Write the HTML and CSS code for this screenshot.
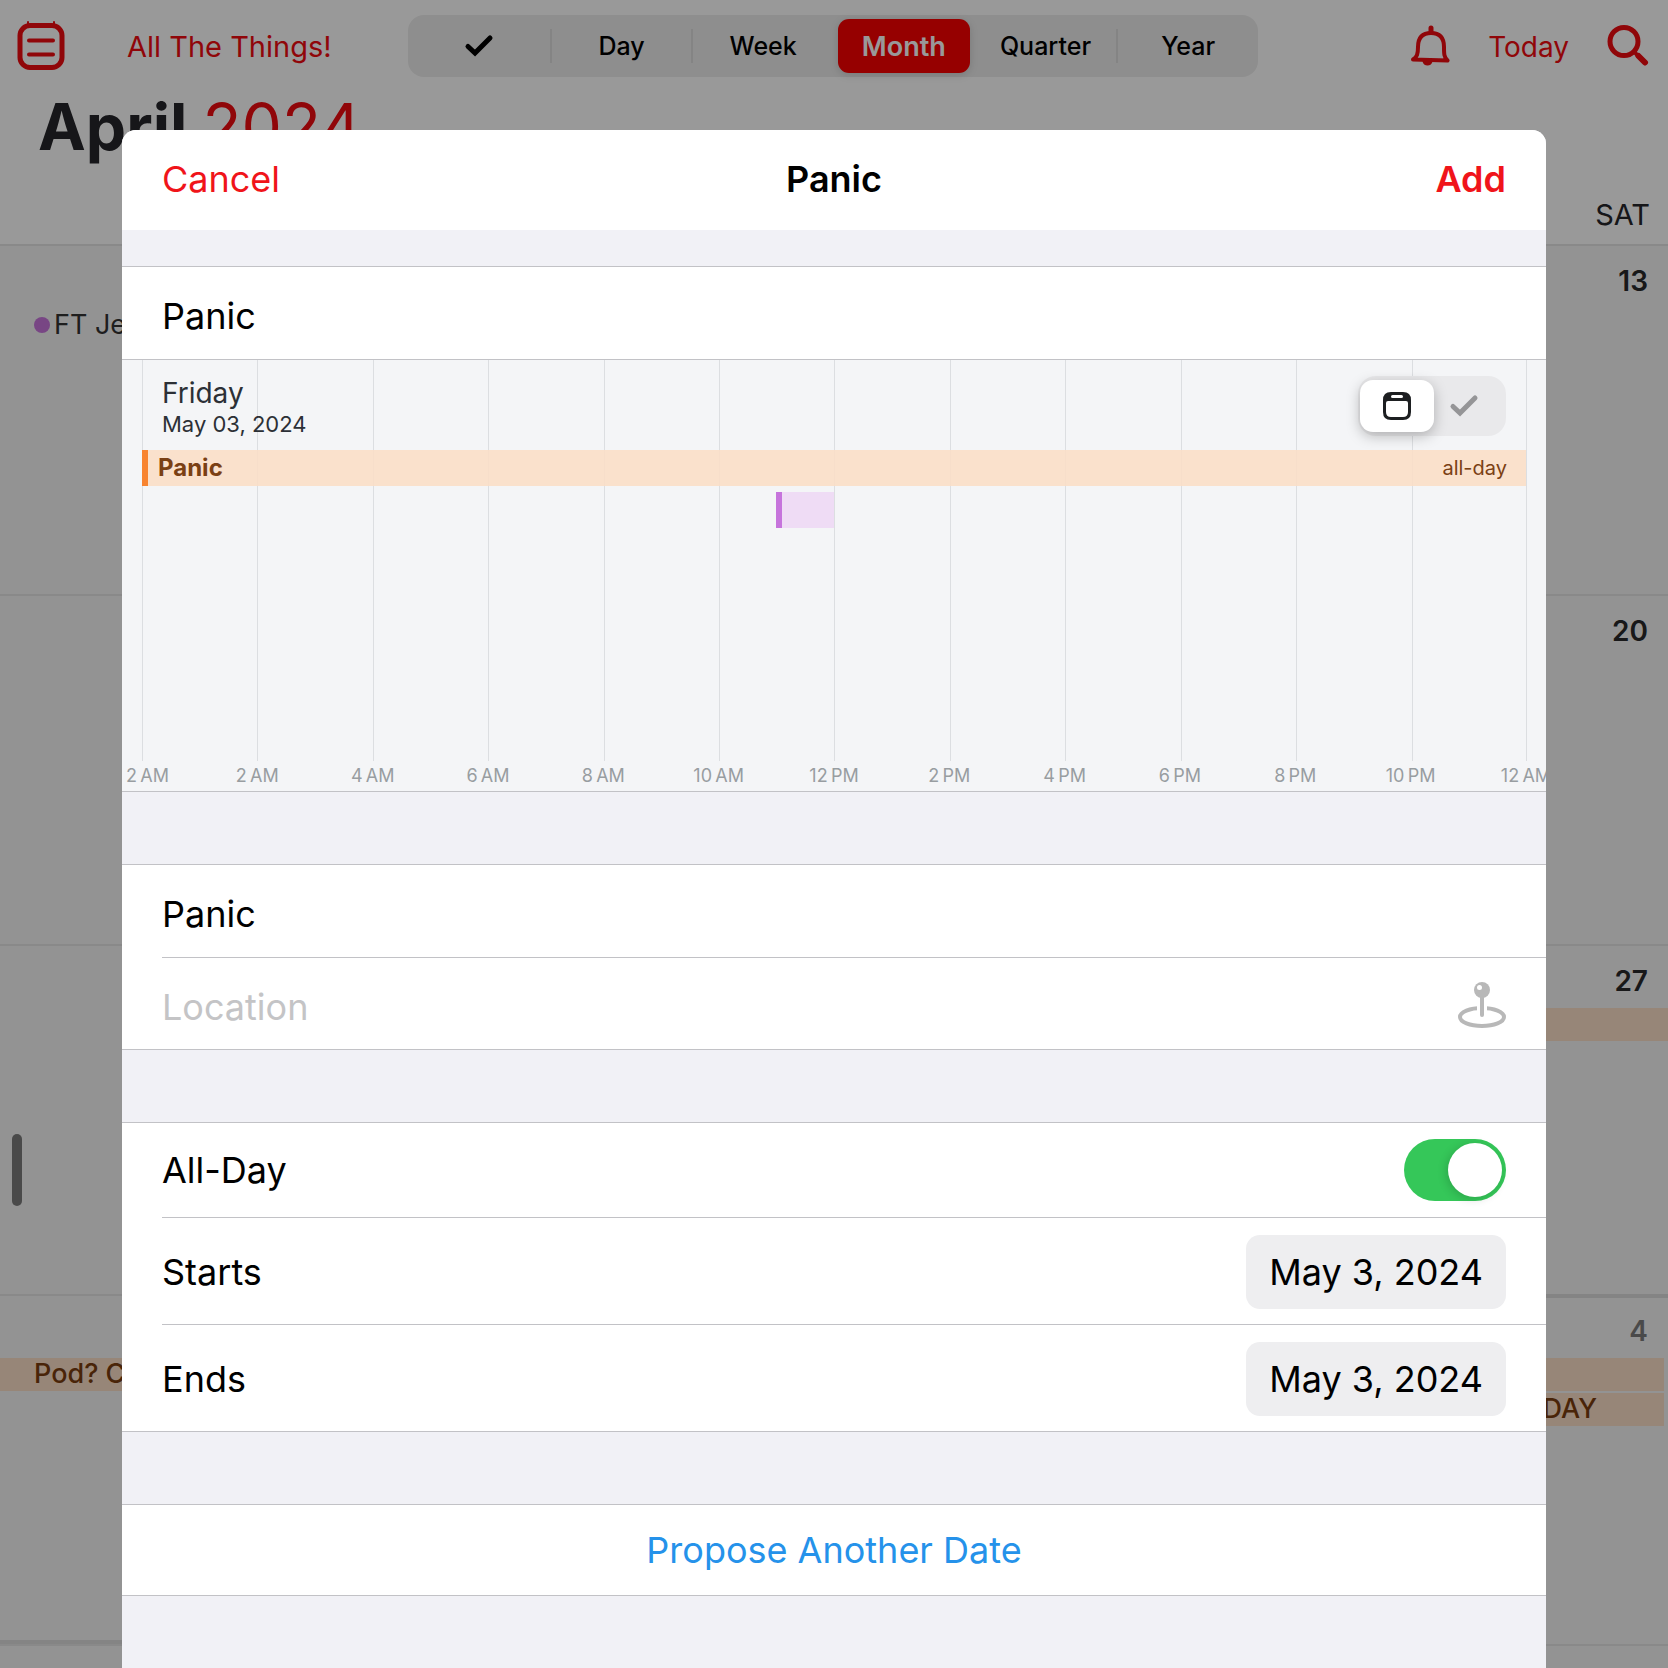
FILE: index.html
```html
<!DOCTYPE html>
<html lang="en">
<head>
<meta charset="utf-8">
<meta name="viewport" content="width=device-width, initial-scale=1">
<title>Calendar</title>
<link rel="stylesheet" href="styles.css">
</head>
<body>
<div class="calendar">
  <header class="toolbar">
    <div class="toolbar-side">
      <button class="icon-button" aria-label="Lists">
        <svg width="48" height="52" viewBox="0 0 48 52" fill="none" stroke="currentColor" stroke-width="5" stroke-linecap="round">
          <rect x="3" y="5.500" width="42" height="42" rx="10"/>
          <path d="M12 20.500H36M12 34.500H36" stroke-width="4"/>
          <path d="M11 2V4M37 2V4" stroke-width="2"/>
        </svg>
      </button>
      <button class="text-button calendar-set">All The Things!</button>
    </div>
    <nav class="views" aria-label="View">
      <button class="view" aria-label="Tasks">
        <svg width="30" height="24" viewBox="0 0 30 24" fill="none" stroke="currentColor" stroke-width="5" stroke-linecap="round" stroke-linejoin="miter"><path d="M4 12.500L11 19L26 4"/></svg>
      </button>
      <button class="view divided">Day</button>
      <button class="view divided">Week</button>
      <button class="view selected">Month</button>
      <button class="view">Quarter</button>
      <button class="view divided">Year</button>
    </nav>
    <div class="toolbar-side end">
      <button class="icon-button" aria-label="Notifications">
        <svg width="40" height="42" viewBox="0 0 40 42" fill="none" stroke="currentColor" stroke-width="4" stroke-linecap="round" stroke-linejoin="round">
          <path d="M3 34.500C7 32 8 29 8 22C8 13 12 8 21 8C30 8 34 13 34 22C34 29 34 32 37.500 35.500Z"/>
          <path d="M21 3V7" stroke-width="5"/>
          <path d="M12.500 36H22.500C22 42 13 42 12.500 36Z" fill="currentColor" stroke="none"/>
        </svg>
      </button>
      <button class="text-button today">Today</button>
      <button class="icon-button" aria-label="Search">
        <svg width="42" height="42" viewBox="0 0 42 42" fill="none" stroke="currentColor" stroke-linecap="round">
          <circle cx="17" cy="16.500" r="14" stroke-width="5"/>
          <path d="M27.500 27L31 31" stroke-width="4"/><path d="M31.500 31L38 37.500" stroke-width="6"/>
        </svg>
      </button>
    </div>
  </header>

  <h1 class="month-title">April <span>2024</span></h1>
  <div class="weekdays"><span>SAT</span></div>

  <main class="weeks">
    <section class="week">
      <div class="day"><p class="event timed"><i class="dot"></i>FT Je</p></div>
      <div class="day last"><time class="number">13</time></div>
    </section>
    <section class="week">
      <div class="day"></div>
      <div class="day last"><time class="number">20</time></div>
    </section>
    <section class="week">
      <div class="day"></div>
      <div class="day last"><time class="number">27</time><p class="event block"></p></div>
    </section>
    <section class="week">
      <div class="day month-end"><p class="event block lead">Pod? C</p></div>
      <div class="day last new-month"><time class="number muted">4</time><p class="event block ends"></p><p class="event block ends tail">DAY</p></div>
    </section>
    <section class="week">
      <div class="day"></div>
      <div class="day last"></div>
    </section>
  </main>
  <div class="drag-handle"></div>
</div>

<div class="backdrop">
  <form class="sheet">
    <header class="sheet-header">
      <button type="button" class="sheet-action">Cancel</button>
      <h2>Panic</h2>
      <button type="button" class="sheet-action primary">Add</button>
    </header>

    <div class="group first">
      <div class="row field"><input class="text-input" type="text" value="Panic" aria-label="Quick entry"></div>
    </div>

    <section class="timeline">
      <div class="grid-lines"><i></i><i></i><i></i><i></i><i></i><i></i><i></i><i></i><i></i><i></i><i></i><i></i></div>
      <div class="timeline-body">
        <div class="timeline-head">
          <div><p class="weekday">Friday</p><p class="date">May 03, 2024</p></div>
          <div class="kind">
            <button type="button" class="kind-option chosen" aria-label="Event">
              <svg width="28" height="28" viewBox="0 0 28 28"><path fill="#1d1f21" fill-rule="evenodd" d="M8 0H20Q28 0 28 8V20Q28 28 20 28H8Q0 28 0 20V8Q0 0 8 0ZM3 11V20Q3 25 8 25H20Q25 25 25 20V11Q25 9 23 9H5Q3 9 3 11ZM9.500 3Q8 3 8 4.500Q8 6 9.500 6H18.500Q20 6 20 4.500Q20 3 18.500 3Z"/></svg>
            </button>
            <button type="button" class="kind-option" aria-label="Task">
              <svg width="30" height="24" viewBox="0 0 30 24" fill="none" stroke="#959597" stroke-width="5" stroke-linecap="round"><path d="M4 12.500L11 19L26 4"/></svg>
            </button>
          </div>
        </div>
        <div class="bar allday"><strong>Panic</strong><span>all-day</span></div>
        <div class="hours"><div class="bar busy"></div></div>
      </div>
      <div class="labels"><span>2&#8201;AM</span><span>2&#8201;AM</span><span>4&#8201;AM</span><span>6&#8201;AM</span><span>8&#8201;AM</span><span>10&#8201;AM</span><span>12&#8201;PM</span><span>2&#8201;PM</span><span>4&#8201;PM</span><span>6&#8201;PM</span><span>8&#8201;PM</span><span>10&#8201;PM</span><span>12&#8201;AM</span></div>
    </section>

    <div class="group">
      <div class="row field"><input class="text-input" type="text" value="Panic" aria-label="Title"></div>
      <div class="row field">
        <input class="text-input" type="text" placeholder="Location" aria-label="Location">
        <button type="button" class="icon-button pin" aria-label="Choose on map">
          <svg width="48" height="48" viewBox="0 0 48 48" fill="none" stroke="#b8b8b8" stroke-width="4">
            <ellipse cx="24" cy="36" rx="22" ry="9"/>
            <path d="M24 20V32" stroke="#fff" stroke-width="10"/>
            <path d="M24 16V34" stroke-linecap="round"/>
            <circle cx="24" cy="9" r="8" fill="#b8b8b8" stroke="none"/>
            <circle cx="21.500" cy="6.500" r="2.500" fill="#fff" stroke="none"/>
          </svg>
        </button>
      </div>
    </div>

    <div class="group">
      <div class="row switch-row"><label for="all-day">All-Day</label><input class="switch" id="all-day" type="checkbox" role="switch" checked></div>
      <div class="row tall"><label for="starts">Starts</label><button type="button" class="date-button" id="starts">May 3, 2024</button></div>
      <div class="row tall"><label for="ends">Ends</label><button type="button" class="date-button" id="ends">May 3, 2024</button></div>
    </div>

    <div class="group"><button type="button" class="propose">Propose Another Date</button></div>
  </form>
</div>
</body>
</html>
```

FILE: styles.css
```css
* { box-sizing: border-box; }

:root {
  --red: #fa0000;
  --line: #c2c2c6;
  --inset: 40px;
}

body {
  margin: 0;
  position: relative;
  min-height: 100vh;
  overflow: hidden;
  font-family: Inter, "Liberation Sans", sans-serif;
  color: #000;
}

h1, h2, p { margin: 0; }

button {
  border: 0;
  padding: 0;
  background: none;
  color: inherit;
  font: inherit;
}

svg { display: block; }

/* Month calendar */
.calendar {
  display: flex;
  flex-direction: column;
  height: 100vh;
  overflow: hidden;
  background: #fff;
}

.toolbar {
  display: grid;
  grid-template-columns: 1fr minmax(0, 850px) 1fr;
  align-items: center;
  height: 92px;
  flex: none;
  padding: 0 19px 0 17px;
}

.toolbar-side { display: flex; align-items: center; color: #f00a10; }
.toolbar-side.end { justify-content: flex-end; gap: 38px; }
.text-button { padding-top: 2px; font-size: 29px; line-height: 36px; white-space: nowrap; }
.text-button.today { font-size: 28px; }
.calendar-set { margin-left: 62px; }

.views {
  display: grid;
  grid-template-columns: repeat(6, minmax(0, 1fr));
  align-items: center;
  height: 62px;
  border-radius: 16px;
  background: #ededed;
}

.view {
  display: flex;
  align-items: center;
  justify-content: center;
  height: 34px;
  font-size: 25px;
  font-weight: 500;
}

.view.divided { border-left: 2px solid #dcdcdc; }

.view.selected {
  height: 54px;
  margin: 0 5px;
  border-radius: 11px;
  background: var(--red);
  color: #fff;
  font-size: 27px;
  font-weight: 600;
  box-shadow: 0 2px 8px rgba(0, 0, 0, 0.15);
}

.month-title {
  flex: none;
  padding-left: 38px;
  height: 100px;
  font-size: 64px;
  line-height: 70px;
  font-weight: 700;
  color: #26262a;
}

.month-title span { font-weight: 400; color: #f00a10; }

.weekdays {
  display: flex;
  justify-content: flex-end;
  flex: none;
  height: 52px;
  padding-right: 18px;
  font-size: 29px;
  line-height: 46px;
  color: #26262a;
}

.weeks { flex: 1; background: #f5f5f5; }

.week {
  display: grid;
  grid-template-columns: repeat(7, 1fr);
  height: 350px;
}

.day { grid-column: 1; border-top: 2px solid #e4e4e4; }
.day.last { grid-column: 7; }
.day.new-month { border-top: 4px solid #dddddd; }
.day.month-end { border-bottom: 4px solid #dddddd; }

.number {
  display: block;
  height: 62px;
  padding: 17px 20px 0 0;
  text-align: right;
  font-size: 28px;
  line-height: 36px;
  font-weight: 600;
  color: #28282a;
}

.new-month .number { height: 60px; padding-top: 15px; }
.number.muted { color: #7c7c7c; }
.event { height: 33px; font-size: 27px; line-height: 32px; color: #333; }
.timed { display: flex; align-items: center; gap: 4px; margin: 62px 0 0 34px; }
.dot { width: 16px; height: 16px; border-radius: 50%; background: #c875dd; }
.block { margin-bottom: 2px; background: #fce0c8; color: #7b3d0e; font-weight: 500; }
.block.lead { margin-top: 62px; padding-left: 34px; }
.block.ends { margin-right: 4px; }
.block.tail { padding-right: 67px; text-align: right; }

.drag-handle {
  position: absolute;
  left: 12px;
  top: 68%;
  width: 10px;
  height: 72px;
  border-radius: 5px;
  background: #7c7c7c;
}

/* New event sheet */
.backdrop {
  position: absolute;
  inset: 0;
  padding: 130px 122px 0;
  background: rgba(0, 0, 0, 0.4);
}

.sheet {
  height: 100%;
  overflow: hidden;
  border-radius: 14px 14px 0 0;
  background: #f1f1f6;
  font-size: 36px;
  line-height: 44px;
}

.sheet-header {
  display: grid;
  grid-template-columns: 1fr auto 1fr;
  align-items: center;
  height: 100px;
  padding: 0 var(--inset) 2px;
  background: #fff;
}

.sheet-header h2 { font-size: 36px; font-weight: 600; }
.sheet-action { justify-self: start; color: #f0141a; }
.sheet-action.primary { justify-self: end; font-weight: 600; }

.group {
  margin-top: 72px;
  border-top: 1px solid var(--line);
  border-bottom: 1px solid var(--line);
  background: #fff;
}

.group.first { margin-top: 36px; }

.row {
  display: flex;
  align-items: center;
  justify-content: space-between;
  min-height: 92px;
  margin-left: var(--inset);
  padding-right: var(--inset);
}

.row + .row { border-top: 1px solid var(--line); }
.field { padding-top: 6px; }
.switch-row { min-height: 94px; }
.tall { min-height: 107px; padding-top: 2px; }

.text-input {
  flex: 1;
  min-width: 0;
  border: 0;
  padding: 0;
  background: none;
  color: #000;
  font: inherit;
}

.text-input::placeholder { color: #c4c4c6; opacity: 1; }
.pin { margin-bottom: 4px; }

.switch {
  appearance: none;
  display: flex;
  justify-content: flex-end;
  width: 102px;
  height: 62px;
  margin: 0;
  padding: 4px;
  border-radius: 31px;
  background: #35c759;
}

.switch::before {
  content: "";
  width: 54px;
  height: 54px;
  border-radius: 50%;
  background: #fff;
  box-shadow: -2px 2px 10px rgba(0, 0, 0, 0.16);
}

.date-button {
  height: 74px;
  padding: 0 23px;
  border-radius: 14px;
  background: #eeeef0;
}

.propose { display: block; width: 100%; height: 90px; color: #2592ea; }

/* Day timeline */
.timeline {
  position: relative;
  overflow: hidden;
  padding: 0 20px;
  border-bottom: 1px solid var(--line);
  background: #f4f5f7;
}

.grid-lines {
  position: absolute;
  inset: 0 19px 30px 20px;
  display: grid;
  grid-template-columns: repeat(12, 1fr);
}

.grid-lines i { border-left: 1px solid #dcdee1; }
.grid-lines i:last-child { border-right: 1px solid #dcdee1; }
.timeline-body { position: relative; height: 401px; }

.timeline-head {
  display: flex;
  justify-content: space-between;
  height: 90px;
  padding: 16px 20px 0;
  color: #2c3036;
}

.weekday { font-size: 28px; line-height: 34px; }
.date { font-size: 22px; line-height: 28px; }

.kind {
  display: flex;
  align-items: center;
  width: 148px;
  height: 60px;
  padding: 0 2px;
  border-radius: 18px;
  background: #e9e9eb;
}

.kind-option { display: grid; place-items: center; width: 60px; height: 52px; }

.kind-option.chosen {
  width: 74px;
  border-radius: 13px;
  background: #fff;
  box-shadow: 0 4px 14px rgba(0, 0, 0, 0.25);
}

.bar { height: 36px; border-left: 6px solid; }

.allday {
  display: flex;
  align-items: center;
  justify-content: space-between;
  padding: 0 19px 0 10px;
  border-color: #f88430;
  background: rgba(250, 222, 198, 0.88);
  color: #7a4014;
  font-size: 24px;
}

.allday span { font-size: 20px; }
.hours { display: grid; grid-template-columns: repeat(24, 1fr); margin-top: 6px; }
.busy { grid-column: 12; border-color: #c674dc; background: #efdcf5; }

.labels {
  display: flex;
  justify-content: space-between;
  height: 30px;
  font-size: 18px;
  line-height: 30px;
  color: #989da1;
}

.labels span { display: flex; justify-content: center; width: 0; white-space: nowrap; }

.labels span:first-child { justify-content: flex-start; margin: 0 16px 0 -16px; }
```
